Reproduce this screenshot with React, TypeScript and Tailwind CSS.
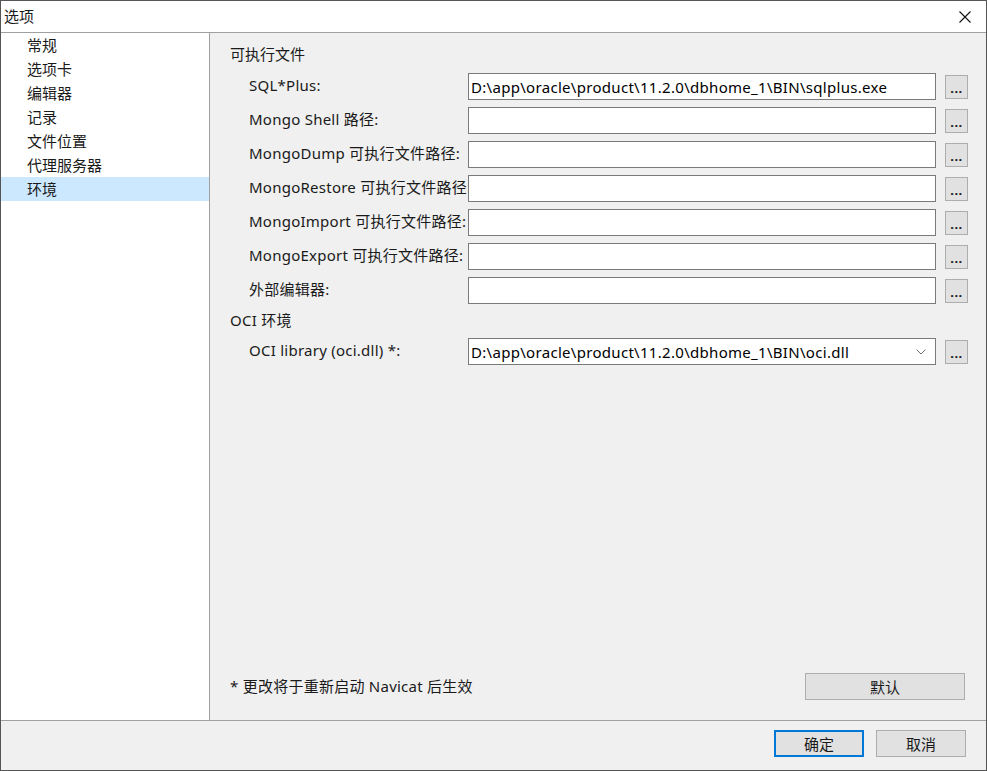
import React from 'react';

const FONT = '"Noto Sans", "Noto Sans CJK SC", sans-serif';

const NAV = ['常规', '选项卡', '编辑器', '记录', '文件位置', '代理服务器', '环境'];

const ROWS = [
  { label: 'SQL*Plus:', value: 'D:\\app\\oracle\\product\\11.2.0\\dbhome_1\\BIN\\sqlplus.exe' },
  { label: 'Mongo Shell 路径:', value: '' },
  { label: 'MongoDump 可执行文件路径:', value: '' },
  { label: 'MongoRestore 可执行文件路径:', value: '' },
  { label: 'MongoImport 可执行文件路径:', value: '' },
  { label: 'MongoExport 可执行文件路径:', value: '' },
  { label: '外部编辑器:', value: '' },
];

function Dots() {
  return (
    <div className="w-[23px] h-[24px] shrink-0 bg-[#e1e1e1] border border-[#adadad] flex items-end justify-center pb-[5px]">
      <span className="text-[13px] leading-[10px] font-bold text-[#1a1a1a] tracking-[0.5px]">...</span>
    </div>
  );
}

function Row({ label, value, select }: { label: string; value: string; select?: boolean }) {
  return (
    <div className="flex items-center h-[27px] pl-[39px]">
      <div className="w-[219px] shrink-0 overflow-hidden whitespace-nowrap text-[15px] leading-[20px] tracking-[0.25px] -mt-[3px] text-[#1a1a1a]">
        {label}
      </div>
      <div className="w-[468px] h-[27px] shrink-0 bg-white border border-[#7a7a7a] flex items-center pl-[2px] pr-[8px]">
        <span className="flex-1 whitespace-nowrap text-[15px] leading-[20px] tracking-[0.3px] text-black">{value}</span>
        {select && (
          <svg width="10" height="6" viewBox="0 0 10 6" className="mr-[1px]">
            <path d="M0.5 0.5 L5 5 L9.5 0.5" fill="none" stroke="#6e6e6e" strokeWidth="1" />
          </svg>
        )}
      </div>
      <div className="ml-[9px]">
        <Dots />
      </div>
    </div>
  );
}

export default function App() {
  return (
    <div
      className="w-[987px] h-[771px] border border-[#555555] bg-white flex flex-col text-[#1a1a1a]"
      style={{ fontFamily: FONT }}
    >
      {/* title bar */}
      <div className="h-[32px] shrink-0 flex items-center justify-between border-b border-[#a0a0a0] bg-white">
        <span className="pl-[3px] text-[15px] leading-[20px] -mt-[1px]">选项</span>
        <svg width="12" height="12" viewBox="0 0 12 12" className="mr-[15px]">
          <path d="M0.5 0.5 L11.5 11.5 M11.5 0.5 L0.5 11.5" stroke="#111" strokeWidth="1.1" />
        </svg>
      </div>

      <div className="flex flex-1 min-h-0">
        {/* sidebar */}
        <div className="w-[209px] shrink-0 border-r border-[#a0a0a0] bg-white flex flex-col">
          {NAV.map((n) => (
            <div
              key={n}
              className={
                'h-[24px] flex items-center pl-[26px] text-[15px] leading-[20px] ' +
                (n === '环境' ? 'bg-[#cce8ff]' : '')
              }
            >
              {n}
            </div>
          ))}
        </div>

        {/* panel */}
        <div className="flex-1 bg-[#f0f0f0] flex flex-col pt-[11px]">
          <div className="h-[22px] flex items-center pl-[20px] text-[15px] leading-[20px] -mt-[1px]">可执行文件</div>
          <div className="flex flex-col gap-[7px] mt-[8px]">
            {ROWS.map((r) => (
              <Row key={r.label} label={r.label} value={r.value} />
            ))}
          </div>
          <div className="h-[22px] mt-[5px] flex items-center pl-[20px] text-[15px] leading-[20px] tracking-[0.25px]">OCI 环境</div>
          <div className="mt-[7px]">
            <Row label="OCI library (oci.dll) *:" value="D:\app\oracle\product\11.2.0\dbhome_1\BIN\oci.dll" select />
          </div>

          <div className="flex-1" />

          <div className="flex items-center justify-between pl-[20px] pr-[21px] mb-[20px]">
            <span className="text-[15px] leading-[20px] tracking-[0.25px] -mt-[2px]">* 更改将于重新启动 Navicat 后生效</span>
            <div className="w-[160px] h-[27px] bg-[#e1e1e1] border border-[#adadad] flex items-center justify-center text-[15px] leading-[20px]">
              默认
            </div>
          </div>
        </div>
      </div>

      {/* footer */}
      <div className="h-[50px] shrink-0 border-t border-[#a0a0a0] bg-[#f0f0f0] flex items-start justify-end gap-[12px] pt-[9px] pr-[20px]">
        <div className="w-[90px] h-[27px] bg-[#e1e1e1] border-2 border-[#0078d7] flex items-center justify-center text-[15px] leading-[20px]">
          确定
        </div>
        <div className="w-[90px] h-[27px] bg-[#e1e1e1] border border-[#adadad] flex items-center justify-center text-[15px] leading-[20px]">
          取消
        </div>
      </div>
    </div>
  );
}
